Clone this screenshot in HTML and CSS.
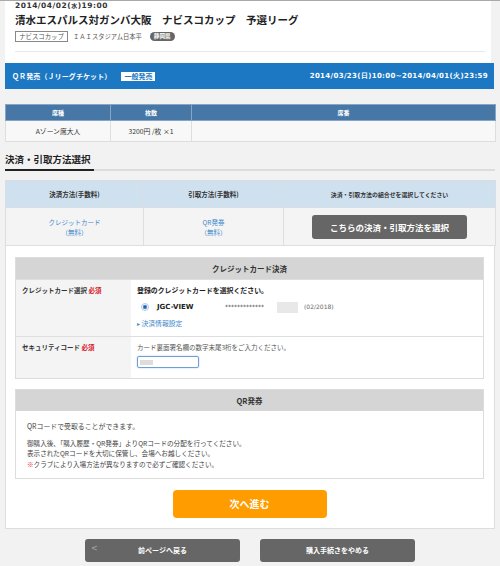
FILE: index.html
```html
<!DOCTYPE html>
<html lang="ja">
<head>
<meta charset="utf-8">
<title>決済・引取方法選択</title>
<link rel="stylesheet" href="styles.css">
</head>
<body>
<div class="topline"></div>
<div class="page">
  <header class="event">
    <div class="date">2014/04/02(<span class="wd">水</span>)19:00</div>
    <h1 class="title">清水エスパルス対ガンバ大阪　ナビスコカップ　予選リーグ</h1>
    <div class="tags">
      <span class="tag">ナビスコカップ</span>
      <span class="venue">ＩＡＩスタジアム日本平</span>
      <span class="pref">静岡県</span>
    </div>
    <div class="sep"></div>
  </header>

  <div class="salebar">
    <div class="sale-left"><span class="sale-name">ＱＲ発売（Ｊリーグチケット）</span><span class="sale-badge">一般発売</span></div>
    <div class="sale-period">2014/03/23(日)10:00~2014/04/01(火)23:59</div>
  </div>

  <table class="seats">
    <colgroup><col class="c1"><col class="c2"><col class="c3"></colgroup>
    <thead><tr><th>席種</th><th>枚数</th><th>席番</th></tr></thead>
    <tbody><tr><td>Aゾーン席大人</td><td>3200円 /枚 ×1</td><td></td></tr></tbody>
  </table>

  <h2 class="sec-title"><span>決済・引取方法選択</span></h2>

  <table class="methods">
    <colgroup><col class="m1"><col class="m2"><col class="m3"></colgroup>
    <thead><tr><th>決済方法(手数料)</th><th>引取方法(手数料)</th><th class="small">決済・引取方法の組合せを選択してください</th></tr></thead>
    <tbody><tr>
      <td><span class="lnk">クレジットカード</span><br><span class="lnk">（無料）</span></td>
      <td><span class="lnk">QR発券</span><br><span class="lnk">（無料）</span></td>
      <td><button class="btn-select" type="button">こちらの決済・引取方法を選択</button></td>
    </tr></tbody>
  </table>

  <div class="wrap">
    <section class="panel">
      <div class="pnl-head">クレジットカード決済</div>
      <div class="cc-row r1">
        <div class="cc-label">クレジットカード選択 <span class="req">必須</span></div>
        <div class="cc-body">
          <div class="lead">登録のクレジットカードを選択ください。</div>
          <div class="card-line">
            <svg class="radio" width="8" height="8" viewBox="0 0 8 8"><circle cx="4" cy="4" r="3.5" fill="#fff" stroke="#a9b8c8" stroke-width="0.8"/><circle cx="4" cy="4" r="2.2" fill="#3b8ee4"/><circle cx="4" cy="4" r="0.9" fill="#1a4f8a"/></svg>
            <span class="card-name">JGC-VIEW</span>
            <span class="card-no">*************</span>
            <span class="card-mask"></span>
            <span class="card-exp">(02/2018)</span>
          </div>
          <div class="settings"><span class="tri">▸</span> 決済情報設定</div>
        </div>
      </div>
      <div class="cc-row r2">
        <div class="cc-label">セキュリティコード <span class="req">必須</span></div>
        <div class="cc-body">
          <div class="note">カード裏面署名欄の数字末尾3桁をご入力ください。</div>
          <div class="input"><span class="input-mask"></span></div>
        </div>
      </div>
    </section>

    <section class="panel qr">
      <div class="pnl-head">QR発券</div>
      <div class="qr-body">
        <p class="p1">QRコードで受取ることができます。</p>
        <p class="p2">御購入後、「購入履歴・QR発券」よりQRコードの分配を行ってください。<br>表示されたQRコードを大切に保管し、会場へお越しください。<br><span class="mark">※</span>クラブにより入場方法が異なりますので必ずご確認ください。</p>
      </div>
    </section>

    <button class="btn-next" type="button">次へ進む</button>
  </div>

  <div class="bottom-nav">
    <button class="btn-gray back" type="button"><span class="chev">&lt;</span>前ページへ戻る</button>
    <button class="btn-gray" type="button">購入手続きをやめる</button>
  </div>
</div>
</body>
</html>
```

FILE: styles.css
```css
* { box-sizing: border-box; margin: 0; padding: 0; }
body {
  margin: 0;
  width: 500px;
  background: #f2f2f2;
  font-family: "Noto Sans CJK JP", "Noto Sans", sans-serif;
  color: #333;
}
.topline { height: 1px; background: #a9a9a9; }
.page { padding-left: 5px; width: 500px; }

/* event header */
.event { width: 486px; height: 62px; background: #fff; padding: 0 10px; }
.date {
  font-family: "DejaVu Sans", sans-serif;
  font-weight: bold;
  font-size: 7.5px;
  letter-spacing: 0.5px;
  line-height: 10px;
  height: 10px;
  color: #333;
}
.date .wd { font-family: "Noto Sans CJK JP", sans-serif; font-size: 6px; }
.title {
  margin-top: 2px;
  font-size: 10.5px;
  font-weight: bold;
  line-height: 14px;
  color: #222;
  white-space: nowrap;
}
.tags { margin-top: 4px; height: 11px; display: flex; align-items: center; }
.tag {
  border: 1px solid #888;
  height: 11px;
  width: 53px;
  font-size: 6.4px;
  line-height: 9px;
  text-align: center;
  color: #555;
}
.venue { margin-left: 5px; font-size: 6.3px; line-height: 9px; color: #555; }
.pref {
  margin-left: 8px;
  background: #666;
  color: #fff;
  font-size: 5.6px;
  font-weight: bold;
  line-height: 9px;
  padding: 0 4px;
  border-radius: 5px;
}
.sep { margin-top: 9px; width: 470px; height: 1px; background: #e8e8e8; }

/* sale bar */
.salebar {
  width: 489px;
  height: 26px;
  background: #1c78c3;
  color: #fff;
  display: flex;
  align-items: center;
  justify-content: space-between;
  padding: 0 6px 0 7px;
}
.sale-left { display: flex; align-items: center; }
.sale-name { font-size: 7px; font-weight: bold; letter-spacing: 0.1px; }
.sale-badge {
  margin-left: 10px;
  background: #fff;
  color: #1c78c3;
  font-size: 7px;
  font-weight: bold;
  line-height: 9px;
  padding: 0 3px;
}
.sale-period {
  font-family: "DejaVu Sans", sans-serif;
  font-weight: bold;
  font-size: 7px;
  letter-spacing: 0.35px;
}

/* seats table */
.seats, .methods {
  width: 490px;
  border-collapse: collapse;
  table-layout: fixed;
}
.seats { margin-top: 15px; }
.seats .c1 { width: 105px; }
.seats .c2 { width: 81px; }
.seats .c3 { width: 304px; }
.seats th {
  height: 16px;
  background: #4677a6;
  color: #fff;
  font-size: 6px;
  font-weight: bold;
  border: 1px solid #86a6c6;
}
.seats td {
  height: 21px;
  background: #f8f8f8;
  border: 1px solid #dedede;
  font-size: 6.8px;
  text-align: center;
  color: #333;
}

/* section title */
.sec-title {
  margin-top: 10px;
  width: 490px;
  border-bottom: 2px solid #dcdcdc;
  font-size: 9.5px;
  font-weight: bold;
  line-height: 14px;
  color: #222;
  white-space: nowrap;
}
.sec-title span {
  display: inline-block;
  padding-right: 3px;
  padding-bottom: 3px;
  border-bottom: 2px solid #222;
  margin-bottom: -2px;
}

/* methods table */
.methods { margin-top: 9px; }
.methods .m1 { width: 138px; }
.methods .m2 { width: 140px; }
.methods .m3 { width: 212px; }
.methods th {
  height: 27px;
  background: #cfe0ef;
  border: 1px solid #d6dde4;
  font-size: 6.5px;
  font-weight: bold;
  color: #333;
}
.methods th.small { font-size: 5.9px; }
.methods td {
  height: 38px;
  background: #f4f4f4;
  border: 1px solid #dedede;
  text-align: center;
  font-size: 6.5px;
  line-height: 10px;
}
.lnk { color: #3f88cc; }
.btn-select {
  width: 155px;
  height: 24px;
  border: 0;
  border-radius: 3px;
  background: #666;
  color: #fff;
  font-family: "Noto Sans CJK JP", sans-serif;
  font-size: 8.5px;
  font-weight: bold;
  vertical-align: middle;
}

/* white wrap */
.wrap {
  width: 490px;
  background: #fff;
  border: 1px solid #dedede;
  border-top: 0;
  padding: 11px 10px 10px 9px;
}
.panel { border: 1px solid #dcdcdc; width: 469px; }
.pnl-head {
  height: 21px;
  background: #d5d5d5;
  font-size: 7.5px;
  font-weight: bold;
  line-height: 21px;
  text-align: center;
  color: #333;
}
.cc-row { display: flex; border-top: 1px solid #dedede; }
.cc-row.r1 { height: 57px; }
.cc-row.r2 { height: 42px; }
.cc-label {
  width: 115px;
  background: #f4f4f4;
  padding: 5px 0 0 6px;
  font-size: 6.5px;
  font-weight: bold;
  line-height: 10px;
  color: #333;
}
.req { color: #d8141e; }
.cc-body { flex: 1; padding: 5px 0 0 6px; font-size: 6.8px; line-height: 10px; }
.lead { font-weight: bold; font-size: 6.9px; color: #222; }
.card-line { margin-top: 7px; height: 10px; display: flex; align-items: center; }
.radio { margin-left: 4px; width: 8px; height: 8px; }
.card-name {
  margin-left: 8px;
  width: 68px;
  font-family: "DejaVu Sans", sans-serif;
  font-weight: bold;
  font-size: 7px;
  color: #222;
}
.card-no {
  width: 52px;
  font-family: "DejaVu Sans", sans-serif;
  font-size: 6px;
  color: #444;
}
.card-mask { width: 21px; height: 11px; background: #e8e8e8; }
.card-exp { margin-left: 6px; font-family: "DejaVu Sans", sans-serif; font-size: 6px; color: #666; }
.settings { margin-top: 6px; color: #3f88cc; font-size: 6.8px; }
.tri { font-size: 6px; }
.note { font-size: 6.5px; color: #555; }
.input {
  margin-top: 4px;
  width: 62px;
  height: 12px;
  border: 1px solid #6f9fd6;
  border-radius: 2px;
  box-shadow: 0 0 1.5px #8fb4e0;
  padding: 3px 0 0 2px;
}
.input-mask { display: block; width: 13px; height: 5px; background: #ddd; }

.qr { margin-top: 10px; }
.qr-body { padding: 10px 12px 9px 11px; color: #444; font-size: 6.6px; }
.qr-body .p1 { line-height: 10px; font-size: 6.9px; }
.qr-body .p2 { margin-top: 7px; line-height: 10.3px; }
.mark { color: #e0303a; }

.btn-next {
  display: block;
  margin: 11px auto 0;
  width: 154px;
  height: 28px;
  border: 0;
  border-radius: 4px;
  background: #ff9c00;
  color: #fff;
  font-family: "Noto Sans CJK JP", sans-serif;
  font-size: 10px;
  font-weight: bold;
}

/* bottom */
.bottom-nav {
  width: 490px;
  margin-top: 10px;
  display: flex;
  justify-content: center;
  gap: 20px;
}
.btn-gray {
  position: relative;
  width: 155px;
  height: 23px;
  border: 0;
  border-radius: 3px;
  background: #666;
  color: #fff;
  font-family: "Noto Sans CJK JP", sans-serif;
  font-size: 7px;
  font-weight: bold;
}
.chev {
  position: absolute;
  left: 6px;
  top: 5px;
  font-family: "DejaVu Sans", sans-serif;
  font-weight: normal;
  font-size: 8px;
  color: #aaa;
}
```
